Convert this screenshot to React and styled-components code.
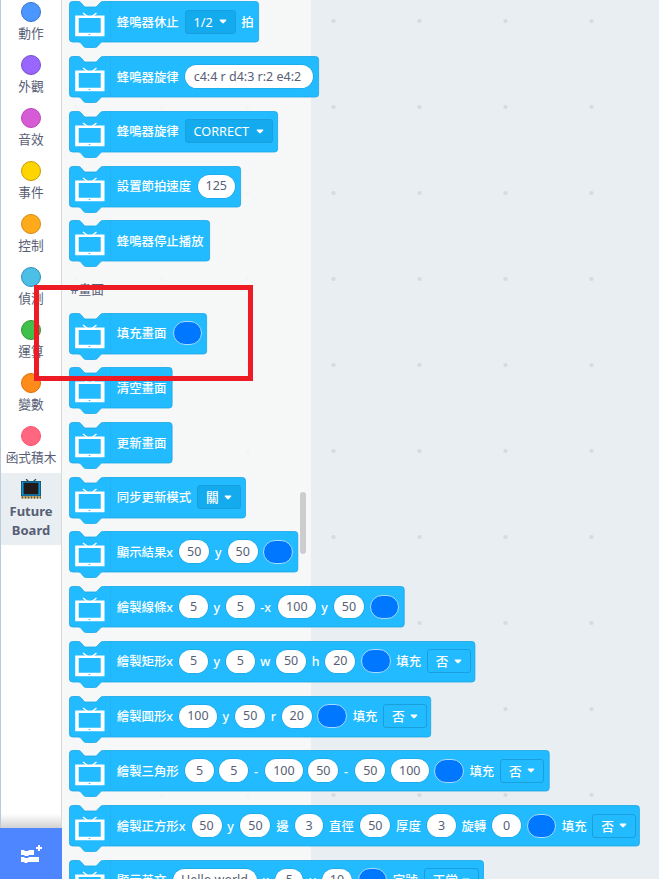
import React from 'react';
import styled, { createGlobalStyle } from 'styled-components';

const Global = createGlobalStyle`
  * { box-sizing: border-box; }
  html, body { margin: 0; padding: 0; overflow: hidden; }
  body { font-family: "Noto Sans", "Noto Sans CJK TC", sans-serif; }
`;

const Page = styled.div`
  position: relative;
  display: flex;
  width: 659px;
  height: 879px;
  overflow: hidden;
  background: #e9eef2;
`;

const Sidebar = styled.nav`
  display: flex;
  flex-direction: column;
  flex: none;
  width: 62px;
  height: 879px;
  background: #fff;
`;

const Categories = styled.div`
  flex: 1;
  min-height: 0;
  border-left: 1px solid #bccada;
  border-right: 1px solid #d9d9d9;
`;

const Category = styled.div`
  display: flex;
  flex-direction: column;
  align-items: center;
  height: 53px;
  padding-top: 2px;
`;

const Bubble = styled.span`
  flex: none;
  width: 20px;
  height: 20px;
  border-radius: 50%;
  background: ${(p) => p.$fill};
  border: 1px solid ${(p) => p.$edge};
`;

const CategoryName = styled.span`
  margin-top: 2px;
  font-size: 12.7px;
  line-height: 19px;
  color: #575e75;
  white-space: nowrap;
`;

const Selected = styled.div`
  display: flex;
  flex-direction: column;
  align-items: center;
  height: 72px;
  margin-top: -4px;
  padding-top: 6px;
  background: #e9eef2;
  color: #575e75;
  font-size: 13px;
  font-weight: 700;
  line-height: 19px;
  text-align: center;

  svg { margin-bottom: 3px; }
`;

const Fade = styled.div`
  height: 14px;
  border-left: 1px solid #bccada;
  border-right: 1px solid #d9d9d9;
  background: linear-gradient(#fff, #d2d2d2);
`;

const AddExtension = styled.button`
  display: flex;
  align-items: center;
  justify-content: center;
  width: 62px;
  height: 51px;
  padding: 1px 0 0;
  border: 0;
  background: #4d86ff;
`;

const Workspace = styled.main`
  flex: 1;
  min-width: 0;
  height: 879px;
  background-image:
    linear-gradient(90deg, rgba(249, 249, 249, 0.85) 249px, transparent 249px),
    radial-gradient(circle, #d9dadc 1.6px, transparent 2.4px);
  background-size: 100% 100%, 86px 86px;
  background-position: 0 0, 56.5px 64px;
`;

const Blocks = styled.div`
  padding: 1.4px 0 0 7.4px;
`;

const BlockRow = styled.div`
  position: relative;
  width: ${(p) => p.$w}px;
  height: 41px;
  margin-bottom: 13.72px;
`;

const Outline = styled.svg`
  position: absolute;
  inset: 0;
  overflow: visible;
`;

const BlockContent = styled.div`
  position: relative;
  display: flex;
  align-items: center;
  gap: 5.72px;
  height: 41px;
  padding-left: 6px;
`;

const TvSlot = styled.div`
  display: flex;
  flex: none;
  width: 35.7px;
  height: 41px;
  padding-top: 11px;
  border-right: 1px solid #20b4f6;
`;

const Word = styled.span`
  flex: none;
  width: ${(p) => p.$w}px;
  padding-top: 2px;
  color: #fff;
  font-size: 12.4px;
  font-weight: 500;
  line-height: 18px;
  white-space: nowrap;
`;

const Input = styled.span`
  display: flex;
  flex: none;
  align-items: center;
  justify-content: center;
  width: ${(p) => p.$w}px;
  height: 23px;
  border-radius: 12px;
  background: #fff;
  box-shadow: 0 0 0 0.6px #1a9fdc;
  color: #575e75;
  font-size: 12.5px;
  line-height: 18px;
  white-space: pre;
`;

const Swatch = styled.span`
  flex: none;
  width: 29.5px;
  height: 24px;
  border: 1px solid #a6dcff;
  border-radius: 12px;
  background: #0077ff;
`;

const Dropdown = styled.span`
  display: flex;
  flex: none;
  align-items: center;
  justify-content: space-between;
  width: ${(p) => p.$w}px;
  height: 24px;
  padding: 0 8px;
  border: 1px solid #189fdc;
  border-radius: 3px;
  background: ${(p) => (p.$dark ? '#14aaee' : 'transparent')};
  color: #fff;
  font-size: 12.7px;
  font-weight: 450;
  line-height: 18px;
  white-space: nowrap;
`;

const Heading = styled.div`
  height: 37.6px;
  padding: 0 0 0 1px;
  color: #575e75;
  font-size: 12.7px;
  line-height: 28px;
`;

const Scrollbar = styled.div`
  position: absolute;
  left: 300px;
  top: 492px;
  width: 6px;
  height: 62px;
  border-radius: 3px;
  background: #cecdce;
`;

const Highlight = styled.div`
  position: absolute;
  left: 34px;
  top: 285px;
  width: 219px;
  height: 96px;
  border: 5px solid #ed1c24;
`;

const categories = [
  ['動作', '#4c97ff', '#3373cc'],
  ['外觀', '#9966ff', '#774dcb'],
  ['音效', '#d65cd6', '#bd42bd'],
  ['事件', '#ffd500', '#cc9900'],
  ['控制', '#ffab19', '#cf8b17'],
  ['偵測', '#4cbfe6', '#2e8eb8'],
  ['運算', '#40bf4a', '#389438'],
  ['變數', '#ff8c1a', '#db6e00'],
  ['函式積木', '#ff6680', '#ff4d6a'],
];

const word = (text, w) => ({ kind: 'word', text, w });
const input = (text, w) => ({ kind: 'input', text, w });
const menu = (text, w, dark) => ({ kind: 'menu', text, w, dark });
const color = { kind: 'color' };

const soundBlocks = [
  { w: 190.1, parts: [word('蜂鳴器休止', 62), menu('1/2', 51, true), word('拍', 13)] },
  { w: 250.1, parts: [word('蜂鳴器旋律', 62.5), input('c4:4 r d4:3 r:2 e4:2 ', 128)] },
  { w: 209.1, parts: [word('蜂鳴器旋律', 62), menu('CORRECT', 88.5, true)] },
  { w: 172.1, parts: [word('設置節拍速度', 75), input('125', 37.5)] },
  { w: 141.1, parts: [word('蜂鳴器停止播放', 87)] },
];

const screenBlocks = [
  { w: 138.1, parts: [word('填充畫面', 50), color] },
  { w: 103.6, parts: [word('清空畫面', 50)] },
  { w: 103.6, parts: [word('更新畫面', 50)] },
  { w: 177, parts: [word('同步更新模式', 74.5), menu('關', 43.5, true)] },
  { w: 229.3, parts: [word('顯示結果x', 56.7), input('50', 30), word('y', 7), input('50', 30), color] },
  { w: 335.7, parts: [word('繪製線條x', 56.7), input('5', 28.5), word('y', 7), input('5', 28.5), word('-x', 12), input('100', 37.5), word('y', 7), input('50', 30), color] },
  { w: 406.4, parts: [word('繪製矩形x', 56.7), input('5', 28.5), word('y', 7), input('5', 28.5), word('w', 10), input('50', 30), word('h', 7.8), input('20', 30), color, word('填充', 24.8), menu('否', 44)] },
  { w: 362.2, parts: [word('繪製圓形x', 56.7), input('100', 37.5), word('y', 7), input('50', 30), word('r', 5.2), input('20', 30), color, word('填充', 24.6), menu('否', 44)] },
  { w: 480.7, parts: [word('繪製三角形', 62.7), input('5', 28.5), input('5', 28.8), word('-', 5.5), input('100', 37.5), input('50', 30), word('-', 5.5), input('50', 30), input('100', 37.5), color, word('填充', 24.8), menu('否', 44)] },
  { w: 570.9, parts: [word('繪製正方形x', 69), input('50', 30), word('y', 7.5), input('50', 30), word('邊', 13), input('3', 28.5), word('直徑', 25.5), input('50', 30), word('厚度', 25.5), input('3', 28.5), word('旋轉', 25.2), input('0', 28.5), color, word('填充', 24.8), menu('否', 44)] },
  { w: 415, parts: [word('顯示英文', 50), input('Hello world', 84), word('x', 7), input('5', 28.5), word('y', 7), input('10', 30), color, word('字號', 25), menu('正常', 55.5)] },
];

const outlinePath = (w) =>
  `M0.5 3.5 Q0.5 0.5 3.5 0.5 H9 C11 0.5 11.5 1.2 12.5 2.3 L14 4.2 C15 5.5 16 6 17.5 6 H25.5 C27 6 28 5.5 29 4.2 L31 2 C32 0.8 32.7 0.5 34.5 0.5 H${w - 3.5} Q${w - 0.5} 0.5 ${w - 0.5} 3.5 V38 Q${w - 0.5} 41 ${w - 3.5} 41 H34.5 C32.7 41 32 41.3 31 42.5 L29 44.7 C28 46 27 46.5 25.5 46.5 H17.5 C16 46.5 15 46 14 44.7 L12.5 42.8 C11.5 41.7 11 41 9 41 H3.5 Q0.5 41 0.5 38 Z`;

const TvIcon = () => (
  <svg width="30" height="26" viewBox="0 0 30 26" fill="none">
    <path d="M8 1 L12.5 4.5 M21.5 1 L17 4.5" stroke="#fff" strokeWidth="1.3" />
    <path fillRule="evenodd" fill="#fff" d="M0.2 3.5 H29.5 V24.2 H0.2 Z M3.7 6 V20.8 H25.7 V6 Z" />
    <path d="M13.7 22.5 H15.3" stroke="#22bbff" strokeWidth="1" />
  </svg>
);

const Caret = () => (
  <svg width="8" height="5" viewBox="0 0 8 5">
    <path d="M1 0.5 H7 Q7.8 1 7 1.8 L4.8 4.1 Q4 4.8 3.2 4.1 L1 1.8 Q0.2 1 1 0.5 Z" fill="#fff" />
  </svg>
);

const BoardIcon = () => (
  <svg width="20" height="20" viewBox="0 0 20 20">
    <path d="M5 0 L8 3 M15 0 L12 3" stroke="#314451" strokeWidth="1.2" />
    <rect x="0" y="2" width="20" height="16" fill="#254153" />
    <rect x="0.7" y="2.7" width="18.6" height="13.8" fill="#0797dd" />
    <rect x="2.3" y="3.5" width="15.4" height="12" fill="#164863" />
    <rect x="3" y="4" width="14" height="11" fill="#211a18" />
    <rect x="0" y="17" width="20" height="2.5" fill="#bea66a" />
    <path d="M1 18.5 H20" stroke="#5d5340" strokeWidth="2" strokeDasharray="1 2" />
  </svg>
);

const ExtensionIcon = () => (
  <svg width="22" height="18" viewBox="0 0 22 18" fill="#fff">
    <path d="M1 5 H4 L5 6 H8 L9 5 H14 V10 H9 L8 11 H5 L4 10 H1 Z" />
    <path d="M1 12 H4 L5 13 H8 L9 12 H19 V17 H8 L7 18 H5 L4 17 H1 Z" />
    <path d="M18 0 H20 V2 H22 V4 H20 V6 H18 V4 H16 V2 H18 Z" />
  </svg>
);

const Part = ({ part }) => {
  if (part.kind === 'word') return <Word $w={part.w}>{part.text}</Word>;
  if (part.kind === 'input') return <Input $w={part.w}>{part.text}</Input>;
  if (part.kind === 'color') return <Swatch />;
  return (
    <Dropdown $w={part.w} $dark={part.dark}>
      {part.text}
      <Caret />
    </Dropdown>
  );
};

const Block = ({ block }) => (
  <BlockRow $w={block.w}>
    <Outline width={block.w} height="47">
      <path d={outlinePath(block.w)} fill="#22bbff" stroke="#1ba6e3" strokeWidth="0.8" />
    </Outline>
    <BlockContent>
      <TvSlot><TvIcon /></TvSlot>
      {block.parts.map((part, i) => <Part key={i} part={part} />)}
    </BlockContent>
  </BlockRow>
);

export default function App() {
  return (
    <Page>
      <Global />
      <Sidebar>
        <Categories>
          {categories.map(([name, fill, edge]) => (
            <Category key={name}>
              <Bubble $fill={fill} $edge={edge} />
              <CategoryName>{name}</CategoryName>
            </Category>
          ))}
          <Selected>
            <BoardIcon />
            <span>Future</span>
            <span>Board</span>
          </Selected>
        </Categories>
        <Fade />
        <AddExtension aria-label="添加擴展"><ExtensionIcon /></AddExtension>
      </Sidebar>
      <Workspace>
        <Blocks>
          {soundBlocks.map((block, i) => <Block key={i} block={block} />)}
          <Heading>#畫面</Heading>
          {screenBlocks.map((block, i) => <Block key={i} block={block} />)}
        </Blocks>
      </Workspace>
      <Scrollbar />
      <Highlight />
    </Page>
  );
}
